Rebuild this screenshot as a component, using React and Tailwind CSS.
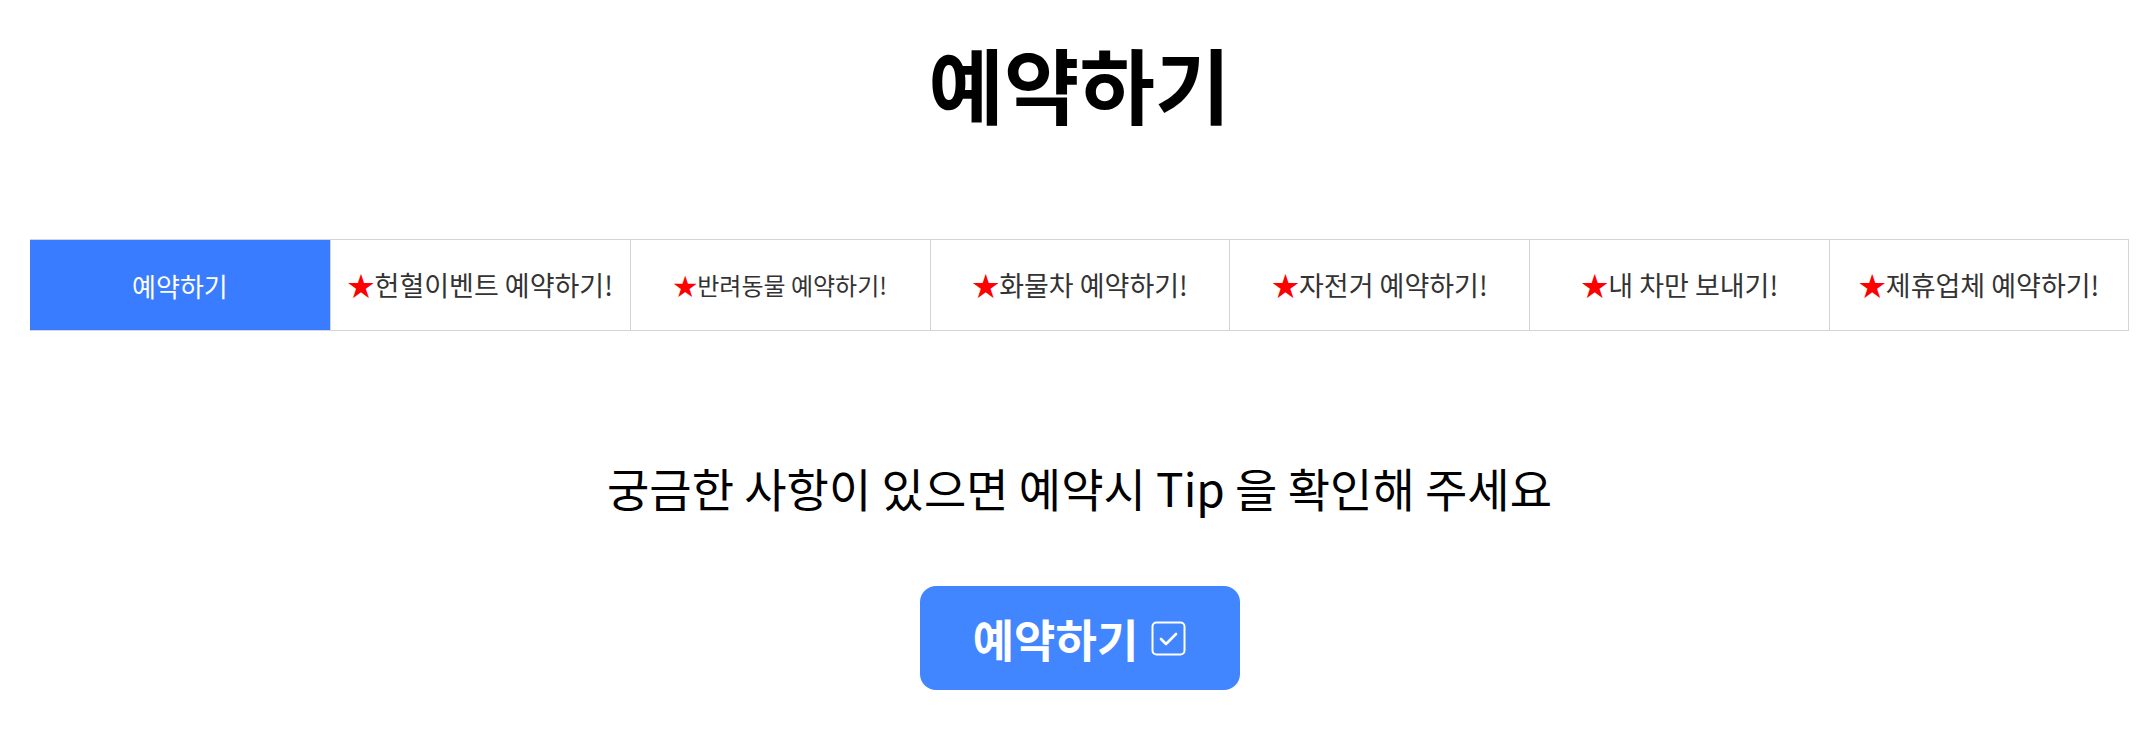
import React from 'react'

const tabs = [
  { label: '예약하기', active: true },
  { label: '헌혈이벤트 예약하기!', star: true },
  { label: '반려동물 예약하기!', star: true, small: true },
  { label: '화물차 예약하기!', star: true },
  { label: '자전거 예약하기!', star: true },
  { label: '내 차만 보내기!', star: true },
  { label: '제휴업체 예약하기!', star: true },
]

function CheckSquare() {
  return (
    <svg width="35" height="35" viewBox="0 0 35 35" fill="none" stroke="currentColor">
      <rect x="1.5" y="1.5" width="32" height="32" rx="4" strokeWidth="2" />
      <path d="M10 18l5 5 10-10" strokeWidth="2.6" strokeLinecap="round" strokeLinejoin="round" />
    </svg>
  )
}

export default function App() {
  return (
    <div className="min-h-screen bg-white pl-[30px] pr-[20px] font-['Noto_Sans_CJK_KR','Noto_Sans',sans-serif]">
      <h1 className="pt-[33px] text-center text-[82px] font-bold leading-[100px] text-black">
        예약하기
      </h1>

      <div className="mt-[106px] grid grid-cols-7 border-y border-[#d4d4d4]">
        {tabs.map((tab, i) => (
          <div
            key={i}
            className={
              tab.active
                ? 'flex h-[90px] items-center justify-center bg-[#3a7cff] text-[26px] text-white'
                : 'flex h-[90px] items-center justify-center border-l border-[#d4d4d4] last:border-r text-[#333333] ' +
                  (tab.small ? 'text-[24px]' : 'text-[27px]')
            }
          >
            {tab.star && <span className="text-[#ff0000]">★</span>}
            <span>{tab.label}</span>
          </div>
        ))}
      </div>

      <p className="mt-[126px] text-center text-[46px] leading-[60px] text-black">
        궁금한 사항이 있으면 예약시 Tip 을 확인해 주세요
      </p>

      <div className="mt-[69px] flex justify-center">
        <button className="flex h-[104px] w-[320px] items-center justify-center gap-[13px] rounded-[16px] bg-[#4286ff] text-white">
          <span className="text-[45px] font-bold leading-none">예약하기</span>
          <CheckSquare />
        </button>
      </div>
    </div>
  )
}
